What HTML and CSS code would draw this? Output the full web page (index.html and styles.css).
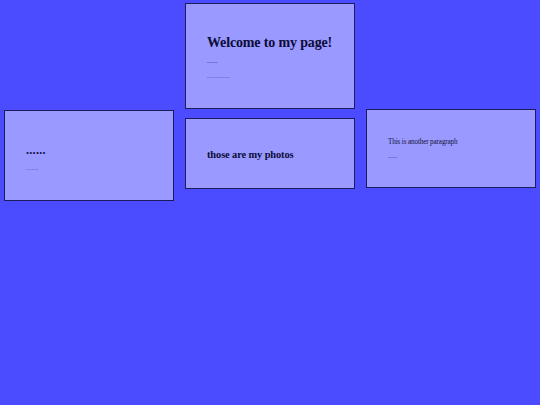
FILE: index.html
```html
<!DOCTYPE html>
<html>
<head>
<meta charset="utf-8">
<link rel="stylesheet" href="styles.css">
</head>
<body>
<div class="page">
  <div class="top-row">
    <div class="card card-welcome">
      <h1 class="title">Welcome to my page!</h1>
      <p class="dots dark">......</p>
      <p class="dots light">.............</p>
    </div>
  </div>
  <div class="bottom-row">
    <div class="card card-left">
      <h2 class="sub">......</h2>
      <p class="dots light">.......</p>
    </div>
    <div class="card card-mid">
      <h2 class="photos">those are my photos</h2>
    </div>
    <div class="card card-right">
      <p class="para">This is another paragraph</p>
      <p class="dots dark">.....</p>
    </div>
  </div>
</div>
</body>
</html>
```
FILE: styles.css
```css
html, body {
  margin: 0;
  padding: 0;
  background: #4b4bff;
  font-family: "Liberation Serif", "Times New Roman", serif;
  color: #0c0c38;
}
.page {
  width: 540px;
  height: 405px;
  padding-top: 3px;
  box-sizing: border-box;
}
.top-row {
  display: flex;
  justify-content: center;
}
.bottom-row {
  display: flex;
  align-items: flex-start;
  gap: 11px;
  padding: 0 4px;
}
.card {
  width: 170px;
  box-sizing: border-box;
  background: #9999ff;
  border: 1px solid #1c1c5c;
  padding-left: 21px;
  display: flex;
  flex-direction: column;
}
.card-welcome { height: 106px; padding-top: 30px; }
.card-left { height: 91px; margin-top: 1px; padding-top: 33px; }
.card-mid { height: 71px; margin-top: 9px; padding-top: 29px; }
.card-right { height: 79px; padding-top: 27px; }

.title {
  margin: 0;
  font-size: 14px;
  font-weight: bold;
  line-height: 18px;
  letter-spacing: -0.15px;
}
.dots {
  margin: 0;
  font-size: 6px;
  line-height: 10px;
  letter-spacing: 0.3px;
}
.dark { color: #1a1a60; }
.light { color: #4c4ca0; }
.card-welcome .dark { margin-top: 4px; }
.card-welcome .light { margin-top: 5px; }
.sub {
  margin: 0;
  font-size: 12px;
  font-weight: bold;
  line-height: 12px;
  letter-spacing: 0.3px;
}
.card-left .light { margin-top: 7px; }
.photos {
  margin: 0;
  font-size: 10.4px;
  font-weight: bold;
  line-height: 13px;
  letter-spacing: -0.1px;
}
.para {
  margin: 0;
  font-size: 7.2px;
  line-height: 10px;
  letter-spacing: -0.15px;
  color: #14143e;
}
.card-right .dark { margin-top: 4px; }
```
